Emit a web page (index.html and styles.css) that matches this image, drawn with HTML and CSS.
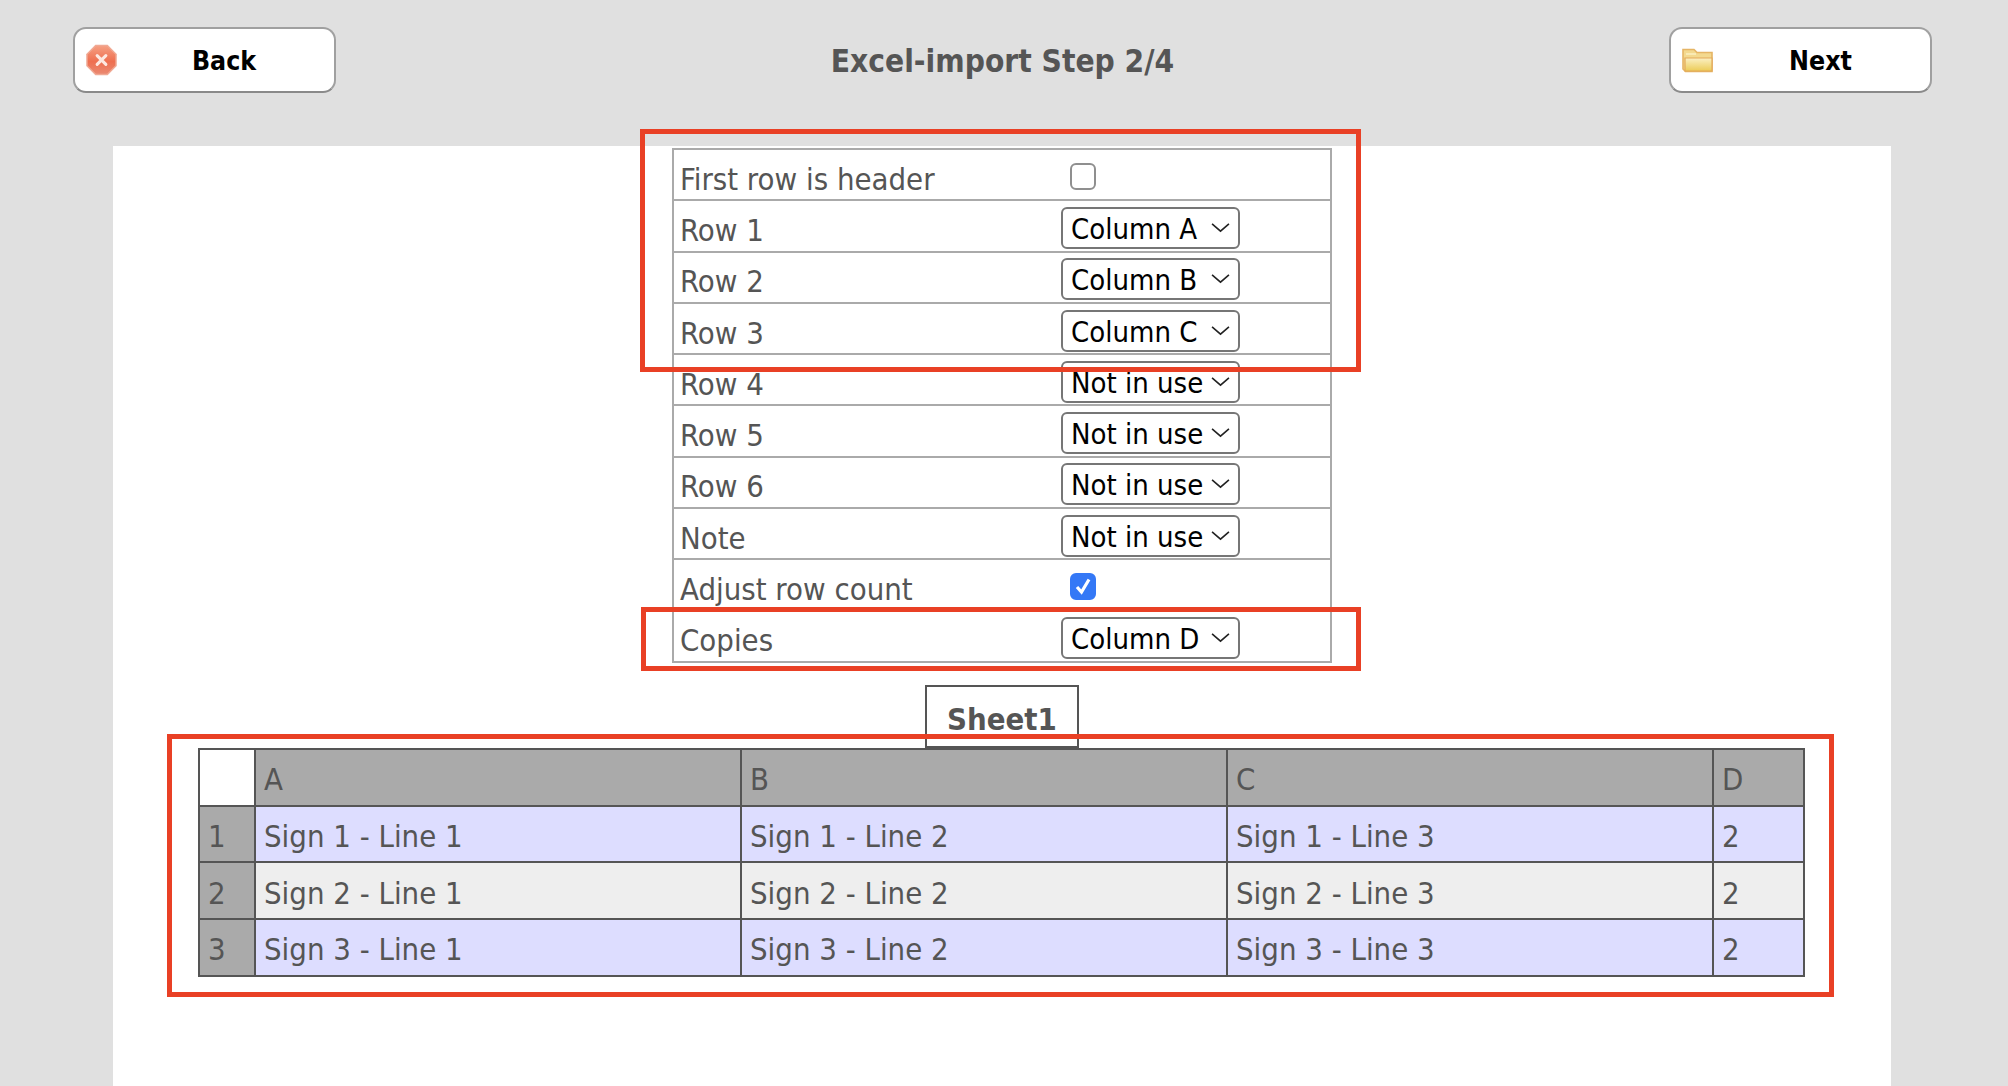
FILE: index.html
```html
<!DOCTYPE html>
<html lang="en">
<head>
<meta charset="utf-8">
<title>Excel-import Step 2/4</title>
<link rel="stylesheet" href="styles.css">
</head>
<body>
<header class="topbar">
  <button class="nav-btn" type="button">
    <svg class="icon icon-stop" viewBox="0 0 32 32" aria-hidden="true">
      <defs><linearGradient id="stopG" x1="0" y1="0" x2="0" y2="1"><stop offset="0" stop-color="#f6a083"/><stop offset="0.55" stop-color="#ee6f50"/><stop offset="1" stop-color="#ea8a72"/></linearGradient></defs>
      <path d="M10 1h12l9 9v12l-9 9H10l-9-9V10z" fill="url(#stopG)" stroke="#f0a994" stroke-width="1.5"/>
      <path d="M11.500 11.500l9 9M20.500 11.500l-9 9" stroke="#fde8e0" stroke-width="3.2" stroke-linecap="round"/>
    </svg>
    <span class="nav-label">Back</span>
  </button>
  <h1 class="title">Excel-import Step 2/4</h1>
  <button class="nav-btn" type="button">
    <svg class="icon icon-folder" viewBox="0 0 32 26" aria-hidden="true">
      <defs><linearGradient id="foldG" x1="0" y1="0" x2="0" y2="1"><stop offset="0" stop-color="#fbf0c4"/><stop offset="1" stop-color="#eccc57"/></linearGradient></defs>
      <path d="M1 2.500h11l3 3h15v19H3.500L1 22z" fill="#f3d98f" stroke="#e5b565" stroke-width="1.6"/>
      <path d="M3 11h27v13H3z" fill="url(#foldG)" stroke="#e3a95a" stroke-width="1.2"/>
      <path d="M4 7h10" stroke="#fbeebd" stroke-width="1.6"/>
    </svg>
    <span class="nav-label">Next</span>
  </button>
</header>

<main class="panel">
  <table class="mapping">
    <tr><td class="lbl">First row is header</td><td class="ctl"><span class="check"><input type="checkbox" aria-label="First row is header"></span></td></tr>
    <tr><td class="lbl">Row 1</td><td class="ctl"><span class="sel"><select><option>Column A</option></select><svg viewBox="0 0 18 10"><path d="M1 1.500l8 7 8-7"/></svg></span></td></tr>
    <tr><td class="lbl">Row 2</td><td class="ctl"><span class="sel"><select><option>Column B</option></select><svg viewBox="0 0 18 10"><path d="M1 1.500l8 7 8-7"/></svg></span></td></tr>
    <tr><td class="lbl">Row 3</td><td class="ctl"><span class="sel"><select><option>Column C</option></select><svg viewBox="0 0 18 10"><path d="M1 1.500l8 7 8-7"/></svg></span></td></tr>
    <tr><td class="lbl">Row 4</td><td class="ctl"><span class="sel"><select><option>Not in use</option></select><svg viewBox="0 0 18 10"><path d="M1 1.500l8 7 8-7"/></svg></span></td></tr>
    <tr><td class="lbl">Row 5</td><td class="ctl"><span class="sel"><select><option>Not in use</option></select><svg viewBox="0 0 18 10"><path d="M1 1.500l8 7 8-7"/></svg></span></td></tr>
    <tr><td class="lbl">Row 6</td><td class="ctl"><span class="sel"><select><option>Not in use</option></select><svg viewBox="0 0 18 10"><path d="M1 1.500l8 7 8-7"/></svg></span></td></tr>
    <tr><td class="lbl">Note</td><td class="ctl"><span class="sel"><select><option>Not in use</option></select><svg viewBox="0 0 18 10"><path d="M1 1.500l8 7 8-7"/></svg></span></td></tr>
    <tr><td class="lbl">Adjust row count</td><td class="ctl"><span class="check"><input type="checkbox" checked aria-label="Adjust row count"><svg viewBox="0 0 26 26"><path d="M7 14l4.500 5L19 6.500"/></svg></span></td></tr>
    <tr><td class="lbl">Copies</td><td class="ctl"><span class="sel"><select><option>Column D</option></select><svg viewBox="0 0 18 10"><path d="M1 1.500l8 7 8-7"/></svg></span></td></tr>
  </table>

  <div class="sheet-tab">Sheet1</div>

  <table class="preview">
    <colgroup><col class="c-idx"><col class="c-wide"><col class="c-wide"><col class="c-wide"><col class="c-d"></colgroup>
    <tr class="head"><th class="corner"></th><th>A</th><th>B</th><th>C</th><th>D</th></tr>
    <tr class="odd"><th>1</th><td>Sign 1 - Line 1</td><td>Sign 1 - Line 2</td><td>Sign 1 - Line 3</td><td>2</td></tr>
    <tr class="even"><th>2</th><td>Sign 2 - Line 1</td><td>Sign 2 - Line 2</td><td>Sign 2 - Line 3</td><td>2</td></tr>
    <tr class="odd"><th>3</th><td>Sign 3 - Line 1</td><td>Sign 3 - Line 2</td><td>Sign 3 - Line 3</td><td>2</td></tr>
  </table>
</main>

<div class="mark mark-top"></div>
<div class="mark mark-copies"></div>
<div class="mark mark-preview"></div>
</body>
</html>
```

FILE: styles.css
```css
* { box-sizing: border-box; }
html, body { height: 100%; }
body {
  margin: 0;
  padding-right: 4px;
  background: #e0e0e0;
  color: #555;
  font-family: "DejaVu Sans Condensed", "DejaVu Sans", sans-serif;
  font-stretch: condensed;
  font-size: 30.8px;
  display: flex;
  flex-direction: column;
  overflow: hidden;
}
.topbar {
  display: flex;
  align-items: flex-start;
  justify-content: space-between;
  padding: 27px 72px 0 73px;
  height: 146px;
}
.nav-btn {
  position: relative;
  display: flex;
  align-items: center;
  width: 263px;
  height: 66px;
  padding: 0 0 0 12px;
  background: #fff;
  border: 2px solid #a0a0a0;
  border-bottom-color: #8a8a8a;
  border-radius: 13px;
  color: #000;
  font: inherit;
  font-weight: 700;
  font-size: 26.5px;
}
.nav-label { flex: 1; text-align: center; padding-right: 3px; }
.icon { flex: none; filter: blur(.7px); }
.icon-stop { width: 31px; height: 32px; margin-left: -1px; }
.icon-folder { width: 32px; height: 26px; margin-left: -1px; }
.title {
  margin: 14px 0 0;
  font-size: 31.4px;
  font-weight: 700;
  color: #555;
  line-height: 40px;
}
.panel {
  flex: 1;
  margin: 0 113px;
  background: #fff;
  display: flex;
  flex-direction: column;
  align-items: center;
  padding-top: 2px;
}
.mapping {
  width: 660px;
  height: 514px;
  border-collapse: collapse;
  table-layout: fixed;
}
.mapping td {
  border: 2px solid #aaa;
  padding: 0;
  height: 51.3px;
}
.mapping .lbl {
  width: 389px;
  border-right: 0;
  padding: 8px 0 0 6px;
  vertical-align: middle;
  white-space: nowrap;
}
.mapping .ctl { border-left: 0; vertical-align: middle; }
.check {
  position: relative;
  display: block;
  width: 26px;
  height: 27px;
  margin: 3px 0 0 8px;
}
.check input {
  appearance: none;
  display: block;
  width: 26px;
  height: 27px;
  margin: 0;
  border: 2px solid #8f8f8f;
  border-radius: 6px;
  background: #fff;
}
.check input:checked { background: #3478f6; border-color: #3478f6; }
.check svg { position: absolute; inset: 0; width: 26px; height: 26px; }
.check path { fill: none; stroke: #fff; stroke-width: 3.2; }
.sel {
  position: relative;
  display: block;
  width: 179px;
  height: 42px;
  margin: 4px 0 0 -1px;
}
.sel select {
  appearance: none;
  width: 100%;
  height: 100%;
  padding: 2px 0 0 8px;
  background: #fff;
  border: 2px solid #767676;
  border-radius: 6px;
  color: #000;
  font: inherit;
  font-size: 29px;
}
.sel svg {
  position: absolute;
  right: 10px;
  top: 15px;
  width: 19px;
  height: 11px;
  pointer-events: none;
}
.sel path { fill: none; stroke: #222; stroke-width: 1.5; }
.sheet-tab {
  display: flex;
  align-items: center;
  justify-content: center;
  margin-top: 22px;
  width: 154px;
  height: 63px;
  border: 2px solid #555;
  font-weight: 700;
  padding-top: 5px;
  position: relative;
  z-index: 1;
  background: #fff;
}
.preview {
  width: 1605px;
  border-collapse: collapse;
  table-layout: fixed;
  margin: 0 0 0 -1px;
}
.c-idx { width: 56px; }
.c-wide { width: 486px; }
.c-d { width: 91px; }
.preview th, .preview td {
  border: 2px solid #555;
  height: 56.7px;
  padding: 4px 0 0 8px;
  text-align: left;
  font-weight: 400;
  vertical-align: middle;
  white-space: nowrap;
}
.preview th { background: #aaa; }
.preview th.corner { background: #fff; }
.odd td { background: #ddf; }
.even td { background: #eee; }
.mark {
  position: absolute;
  border: 5px solid #e94025;
  pointer-events: none;
  z-index: 5;
}
.mark-top { left: 640px; top: 129px; width: 721px; height: 243px; }
.mark-copies { left: 641px; top: 607px; width: 720px; height: 64px; }
.mark-preview { left: 167px; top: 734px; width: 1667px; height: 263px; }
```
